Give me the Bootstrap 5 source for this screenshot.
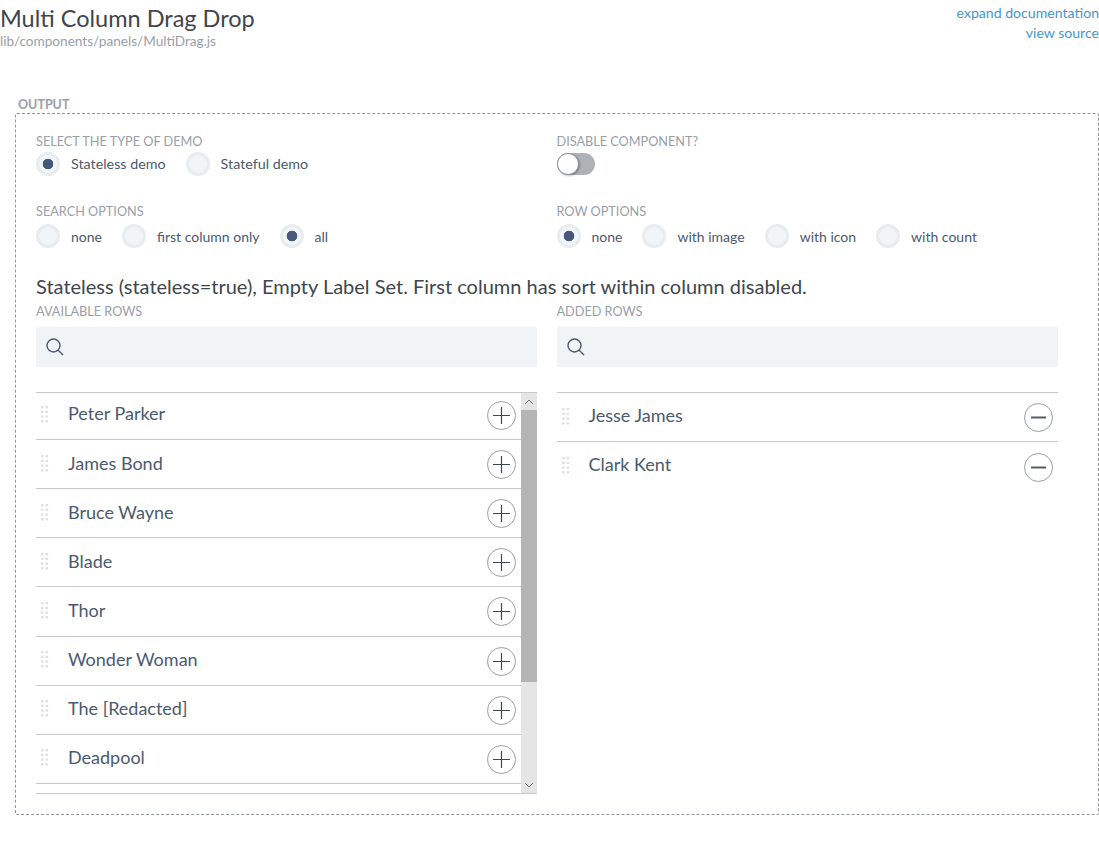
<!DOCTYPE html>
<html lang="en">
<head>
  <meta charset="UTF-8">
  <title>Multi Column Drag Drop</title>
  <link href="https://cdn.jsdelivr.net/npm/bootstrap@5.3.0/dist/css/bootstrap.min.css" rel="stylesheet">
  <style>
    body { font-family: Lato, "Liberation Sans", sans-serif; color: #3f4a56; background: #fff; }
    .page-head { height: 98px; }
    .page-title { font-size: 23.5px; line-height: 28px; color: #40464d; padding-top: 4px; margin: 0; font-weight: 400; }
    .page-path { font-size: 13.6px; line-height: 18px; color: #98a0a8; }
    .head-links { font-size: 14.1px; line-height: 20px; padding-top: 3px; }
    .head-links a { color: #3f97cf; text-decoration: none; }
    .out-label { font-size: 12.5px; line-height: 14px; font-weight: 700; color: #98a0a8; margin-left: 18px; height: 15px; text-transform: uppercase; }
    .out-box { margin-left: 15px; width: 1084px; height: 702px; border: 1px dashed #8f959b; border-radius: 2px; padding: 20px 20px 0 20px; }
    .top-row { height: 70px; }
    .field-label { font-size: 12.7px; line-height: 14px; color: #98a0a8; text-transform: uppercase; }
    .radio-row { font-size: 14px; color: #4a5a70; height: 24px; margin-top: 6px; }
    .radio-row.demo-row { font-size: 14.3px; margin-top: 4px; }
    .radio-opt { gap: 11px; margin-right: 20px; }
    .radio-dot { width: 24px; height: 24px; border-radius: 50%; background: #f2f5f8; border: 3px solid #e8ecef; }
    .radio-dot.sel { background: radial-gradient(circle, #46597a 0 5px, #f2f5f8 5.6px); }
    .switch-track { width: 38px; height: 22px; border-radius: 11px; background: #aeb2b6; margin-top: 5px; }
    .switch-knob { width: 22px; height: 22px; border-radius: 50%; background: #fff; border: 1px solid #8f959b; box-shadow: 1px 1px 2px rgba(0,0,0,.25); }
    .col-wrap { width: 520.5px; }
    .col-inner { width: 501px; }
    .desc-text { font-size: 20px; line-height: 24px; color: #40464d; margin-top: 26px; }
    .lists-row { margin-top: 6px; }
    .search-bar { height: 40px; background: #f0f4f7; border-radius: 2px; padding-left: 9px; margin-top: 9px; margin-bottom: 25px; }
    .list-frame { height: 402px; border-top: 1px solid #c6c8ca; border-bottom: 1px solid #c6c8ca; overflow: hidden; }
    .list-scroll { height: 400px; overflow: hidden; }
    .added-list { border-top: 1px solid #c6c8ca; }
    .row-item { height: 49.15px; border-bottom: 1px solid #c6c8ca; font-size: 18px; color: #4a5a70; padding-right: 5px; padding-bottom: 2px; }
    .row-item.clipped { height: 47px; padding-bottom: 4px; }
    .row-item.clipped .row-name, .added-list .row-name { margin-bottom: 2px; }
    .added-list .row-item:last-child { border-bottom: 0; }
    .handle { width: 32px; padding-left: 5px; line-height: 0; }
    .round-btn { width: 29px; height: 29px; border-radius: 50%; border: 1px solid #9a9ea3; background: #fff; padding: 0; margin-top: 3px; }
    .scroll-bar { width: 16px; height: 400px; background: #e5e5e5; }
    .scroll-arrow { height: 17px; }
    .scroll-thumb { height: 272px; background: #b4b4b4; }
    .scroll-rest { flex: 1; }
  </style>
</head>
<body>
  <div class="page-head d-flex justify-content-between">
    <div>
      <h1 class="page-title">Multi Column Drag Drop</h1>
      <div class="page-path">lib/components/panels/MultiDrag.js</div>
    </div>
    <div class="head-links text-end">
      <div><a href="#">expand documentation</a></div>
      <div><a href="#">view source</a></div>
    </div>
  </div>

  <div class="out-label">Output</div>
  <div class="out-box">
    <div class="d-flex top-row">
      <div class="col-wrap">
        <div class="field-label">Select the type of demo</div>
        <div class="radio-row demo-row d-flex align-items-center">
          <div class="radio-opt d-flex align-items-center"><span class="radio-dot sel"></span>Stateless demo</div>
          <div class="radio-opt d-flex align-items-center"><span class="radio-dot"></span>Stateful demo</div>
        </div>
      </div>
      <div class="col-wrap">
        <div class="field-label">Disable component?</div>
        <div class="switch-track"><div class="switch-knob"></div></div>
      </div>
    </div>
    <div class="d-flex">
      <div class="col-wrap">
        <div class="field-label">Search options</div>
        <div class="radio-row d-flex align-items-center">
          <div class="radio-opt d-flex align-items-center"><span class="radio-dot"></span>none</div>
          <div class="radio-opt d-flex align-items-center"><span class="radio-dot"></span>first column only</div>
          <div class="radio-opt d-flex align-items-center"><span class="radio-dot sel"></span>all</div>
        </div>
      </div>
      <div class="col-wrap">
        <div class="field-label">Row options</div>
        <div class="radio-row d-flex align-items-center">
          <div class="radio-opt d-flex align-items-center"><span class="radio-dot sel"></span>none</div>
          <div class="radio-opt d-flex align-items-center"><span class="radio-dot"></span>with image</div>
          <div class="radio-opt d-flex align-items-center"><span class="radio-dot"></span>with icon</div>
          <div class="radio-opt d-flex align-items-center"><span class="radio-dot"></span>with count</div>
        </div>
      </div>
    </div>

    <div class="desc-text">Stateless (stateless=true), Empty Label Set. First column has sort within column disabled.</div>

    <div class="d-flex lists-row">
      <div class="col-wrap">
        <div class="col-inner">
          <div class="field-label">Available rows</div>
          <div class="search-bar d-flex align-items-center">
            <svg width="20" height="20" viewBox="0 0 20 20" fill="none" stroke="#4a5a70" stroke-width="1.4"><circle cx="8.5" cy="8.5" r="6.5"/><path d="M13.2 13.2 18 18"/></svg>
          </div>
          <div class="list-frame d-flex">
            <div class="list-scroll flex-grow-1" id="availList"></div>
            <div class="scroll-bar d-flex flex-column">
              <div class="scroll-arrow d-flex justify-content-center align-items-center"><svg width="10" height="6" viewBox="0 0 10 6" fill="none" stroke="#777"><path d="M1 5 5 1 9 5"/></svg></div>
              <div class="scroll-thumb"></div>
              <div class="scroll-rest"></div>
              <div class="scroll-arrow d-flex justify-content-center align-items-center"><svg width="10" height="6" viewBox="0 0 10 6" fill="none" stroke="#777"><path d="M1 1 5 5 9 1"/></svg></div>
            </div>
          </div>
        </div>
      </div>
      <div class="col-wrap">
        <div class="col-inner">
          <div class="field-label">Added rows</div>
          <div class="search-bar d-flex align-items-center">
            <svg width="20" height="20" viewBox="0 0 20 20" fill="none" stroke="#4a5a70" stroke-width="1.4"><circle cx="8.5" cy="8.5" r="6.5"/><path d="M13.2 13.2 18 18"/></svg>
          </div>
          <div class="added-list" id="addedList"></div>
        </div>
      </div>
    </div>
  </div>

  <script>
    const handle = '<div class="handle"><svg width="8" height="17" viewBox="0 0 8 17" fill="#dfe1e3">' +
      [0, 4.7, 9.4, 14.1].map(y => [0, 4.5].map(x => `<rect x="${x}" y="${y}" width="2.6" height="2.4"/>`).join("")).join("") +
      '</svg></div>';
    const plus = '<svg width="19" height="19" viewBox="0 0 19 19" stroke="#40464d" stroke-width="1.2"><path d="M1 9.5H18M9.5 1V18"/></svg>';
    const minus = '<svg width="17" height="17" viewBox="0 0 17 17" stroke="#545c66" stroke-width="2"><path d="M1 8.5H16"/></svg>';

    function rowHtml(name, icon, cls) {
      return `<div class="row-item d-flex align-items-center ${cls}">${handle}<span class="row-name flex-grow-1">${name}</span>` +
        `<button class="round-btn d-flex align-items-center justify-content-center" type="button">${icon}</button></div>`;
    }

    const avail = ["Peter Parker", "James Bond", "Bruce Wayne", "Blade", "Thor", "Wonder Woman", "The [Redacted]", "Deadpool"];
    document.getElementById("availList").innerHTML =
      avail.map((n, i) => rowHtml(n, plus, i === 0 ? "clipped" : "")).join("");
    document.getElementById("addedList").innerHTML =
      ["Jesse James", "Clark Kent"].map(n => rowHtml(n, minus, "")).join("");
  </script>
</body>
</html>
